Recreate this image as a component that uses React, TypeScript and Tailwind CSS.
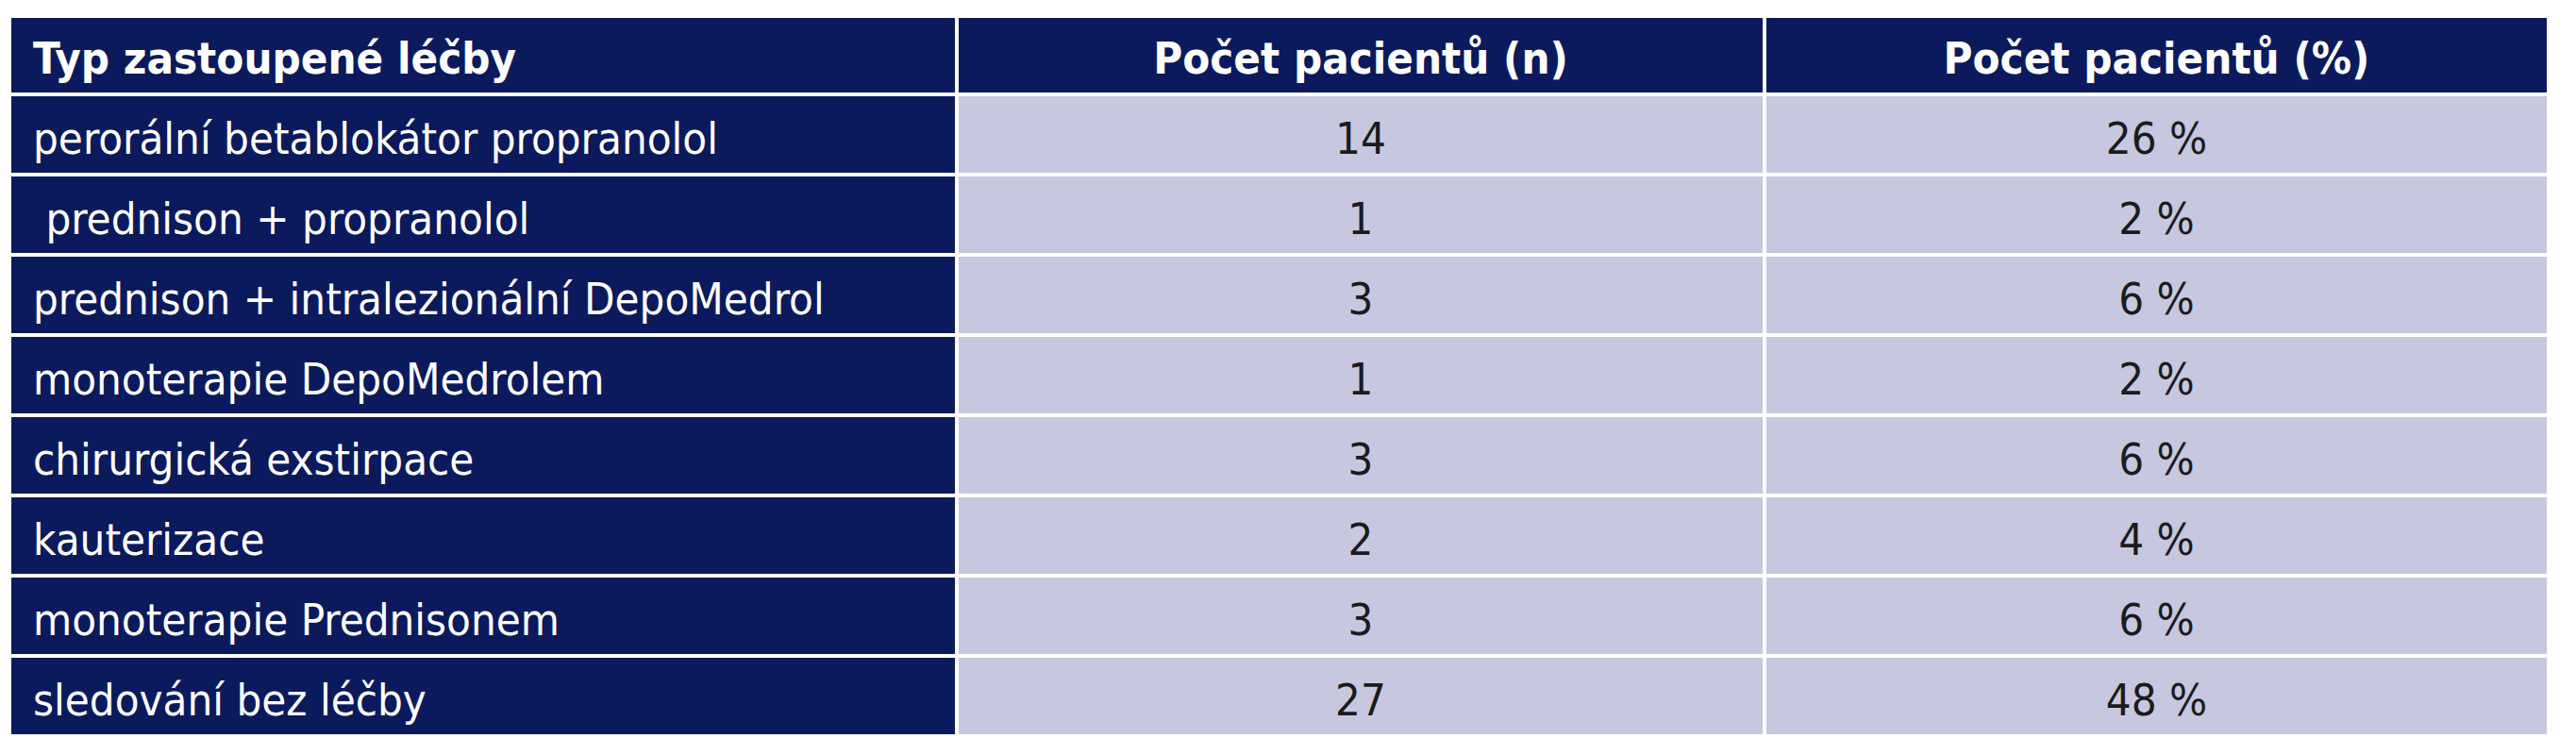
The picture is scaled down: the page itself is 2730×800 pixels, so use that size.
import React from "react";

const rows: [string, string, string][] = [
  ["perorální betablokátor propranolol", "14", "26 %"],
  [" prednison + propranolol", "1", "2 %"],
  ["prednison + intralezionální DepoMedrol", "3", "6 %"],
  ["monoterapie DepoMedrolem", "1", "2 %"],
  ["chirurgická exstirpace", "3", "6 %"],
  ["kauterizace", "2", "4 %"],
  ["monoterapie Prednisonem", "3", "6 %"],
  ["sledování bez léčby", "27", "48 %"],
];

export default function App() {
  return (
    <div className="min-h-[800px] w-[2730px] bg-white pt-[19px] pl-[12px] font-['DejaVu_Sans_Condensed','DejaVu_Sans',sans-serif] font-stretch-condensed">
      <div className="grid w-[2687px] grid-cols-[1000px_852px_827px] grid-rows-[79px_repeat(8,81px)] gap-[4px] text-[47px] leading-none">
        <div className="flex items-center whitespace-pre bg-[#0b1a5c] pt-[6px] pl-[23px] font-bold text-white">
          Typ zastoupené léčby
        </div>
        <div className="flex items-center justify-center bg-[#0b1a5c] pt-[6px] font-bold text-white">
          Počet pacientů (n)
        </div>
        <div className="flex items-center justify-center bg-[#0b1a5c] pt-[6px] font-bold text-white">
          Počet pacientů (%)
        </div>
        {rows.map(([label, n, pct], i) => (
          <React.Fragment key={i}>
            <div className="flex items-center whitespace-pre bg-[#0b1a5c] pt-[8px] pl-[23px] text-white">
              {label}
            </div>
            <div className="flex items-center justify-center bg-[#c7c7df] pt-[8px] text-[#1b1b1b]">
              {n}
            </div>
            <div className="flex items-center justify-center bg-[#c7c7df] pt-[8px] text-[#1b1b1b]">
              {pct}
            </div>
          </React.Fragment>
        ))}
      </div>
    </div>
  );
}
